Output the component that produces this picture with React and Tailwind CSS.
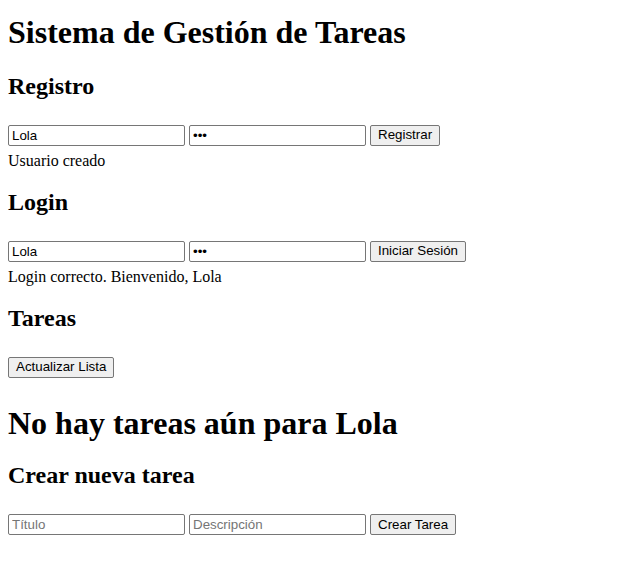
import { useState } from "react";

const inputCls =
  "w-[177px] h-[21px] border border-[#767676] rounded-[2px] bg-white pl-[3px] pr-[2px] text-[13.333px] text-black font-['Liberation_Sans',Arial,sans-serif] placeholder:text-[#757575] outline-none";

const btnCls =
  "h-[21px] px-[7px] border border-[#767676] rounded-[2px] bg-[#efefef] text-[13.333px] text-black font-['Liberation_Sans',Arial,sans-serif] leading-none";

const FormRow = ({ user, pass, placeholders, label, className = "" }) => (
  <div className={`flex items-start gap-[4px] ${className}`}>
    <input
      type="text"
      className={inputCls}
      defaultValue={user}
      placeholder={placeholders?.[0]}
    />
    <input
      type={placeholders ? "text" : "password"}
      className={inputCls}
      defaultValue={pass}
      placeholder={placeholders?.[1]}
    />
    <button className={btnCls}>{label}</button>
  </div>
);

export default function App() {
  const [user] = useState("Lola");

  return (
    <div className="px-2 font-['Liberation_Serif','Times_New_Roman',serif] text-base leading-[normal] text-black bg-white">
      {/* Header */}
      <h1 className="mt-[13.5px] text-[32px] font-bold">
        Sistema de Gestión de Tareas
      </h1>

      {/* Registro */}
      <h2 className="mt-[22.5px] text-[24px] font-bold">Registro</h2>
      <FormRow user={user} pass="abc" label="Registrar" className="mt-[24.6px]" />
      <div className="mt-[6px]">Usuario creado</div>

      {/* Login */}
      <h2 className="mt-[19.4px] text-[24px] font-bold">Login</h2>
      <FormRow user={user} pass="abc" label="Iniciar Sesión" className="mt-[24.6px]" />
      <div className="mt-[6.8px]">Login correcto. Bienvenido, {user}</div>

      {/* Tareas */}
      <h2 className="mt-[18.6px] text-[24px] font-bold">Tareas</h2>
      <div className="mt-[24.6px]">
        <button className={btnCls}>Actualizar Lista</button>
      </div>

      <h1 className="mt-[27.5px] text-[32px] font-bold">
        No hay tareas aún para {user}
      </h1>

      <h2 className="mt-[19.8px] text-[24px] font-bold">Crear nueva tarea</h2>
      <FormRow
        user=""
        pass=""
        placeholders={["Título", "Descripción"]}
        label="Crear Tarea"
        className="mt-[25.6px] pb-[30px]"
      />
    </div>
  );
}
